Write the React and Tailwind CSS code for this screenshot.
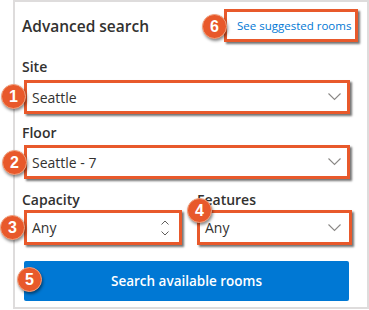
import React from 'react';

const font = { fontFamily: '"Open Sans", "Noto Sans", sans-serif' };

const Chevron = () => (
    <svg width="13" height="8" viewBox="0 0 13 8" className="shrink-0">
        <polyline points="0.5,0.5 6.5,6.5 12.5,0.5" fill="none" stroke="#8a8886" strokeWidth="1.1" />
    </svg>
);

const Spinner = () => (
    <div className="flex flex-col items-center gap-[6px]">
        <svg width="8" height="5" viewBox="0 0 8 5">
            <polyline points="0.5,4.5 4,1 7.5,4.5" fill="none" stroke="#605e5c" strokeWidth="1" />
        </svg>
        <svg width="8" height="5" viewBox="0 0 8 5">
            <polyline points="0.5,0.5 4,4 7.5,0.5" fill="none" stroke="#605e5c" strokeWidth="1" />
        </svg>
    </div>
);

const Badge = ({ n, className }) => (
    <div
        className={`absolute w-[25px] h-[25px] rounded-full bg-[#e8592b] border border-[#f2a27f] text-white font-bold text-[16px] flex items-center justify-center shadow-[1px_2px_3px_rgba(0,0,0,0.45)] ${className}`}
        style={{ fontFamily: '"Liberation Sans", Arial, sans-serif' }}
    >
        {n}
    </div>
);

const Box = ({ children, className = '' }) => (
    <div className={`border-[3px] border-[#e8592b] bg-white shadow-[2px_2px_2px_rgba(0,0,0,0.55)] flex items-center ${className}`}>
        {children}
    </div>
);

const Label = ({ children, className = '' }) => (
    <div className={`h-[20px] leading-[20px] text-[14px] font-semibold text-[#323130] ${className}`}>{children}</div>
);

export default function App() {
    return (
        <div className="relative w-[369px] h-[310px] bg-white pl-[13px] overflow-hidden" style={font}>
            <div className="h-[309px] w-[356px] border-2 border-[#dedcdc] pl-[7px] pt-[7px]">
                <div className="flex items-center justify-between h-[33px] pr-[9px]">
                    <h2 className="text-[15.5px] font-semibold text-[#323130] pt-[2px]">Advanced search</h2>
                    <Box className="h-[33px] w-[134px] pl-[10px]">
                        <a className="text-[11.5px] text-[#0078d4]">See suggested rooms</a>
                    </Box>
                </div>

                <Label className="mt-[15px]">Site</Label>
                <Box className="mt-[3px] ml-[2px] w-[326px] h-[34px] justify-between pl-[5px] pr-[6px]">
                    <span className="text-[14px] text-[#323130]">Seattle</span>
                    <Chevron />
                </Box>

                <Label className="mt-[9px]">Floor</Label>
                <Box className="mt-[2px] ml-[2px] w-[326px] h-[34px] justify-between pl-[5px] pr-[6px]">
                    <span className="text-[14px] text-[#323130]">Seattle - 7</span>
                    <Chevron />
                </Box>

                <div className="flex mt-[11px]">
                    <div className="w-[175px]">
                        <Label>Capacity</Label>
                        <Box className="ml-[2px] w-[158px] h-[35px] justify-between pl-[5px] pr-[10px]">
                            <span className="text-[14px] text-[#323130]">Any</span>
                            <Spinner />
                        </Box>
                    </div>
                    <div>
                        <Label>Features</Label>
                        <Box className="w-[155px] h-[35px] justify-between pl-[5px] pr-[8px]">
                            <span className="text-[14px] text-[#323130]">Any</span>
                            <Chevron />
                        </Box>
                    </div>
                </div>

                <button className="mt-[16px] ml-[2px] w-[325px] h-[40px] bg-[#0078d4] text-white text-[13.5px] font-semibold rounded-[2px]">
                    Search available rooms
                </button>
            </div>

            <Badge n="6" className="left-[202px] top-[14px]" />
            <Badge n="1" className="left-[1px] top-[84px]" />
            <Badge n="2" className="left-[2px] top-[150px]" />
            <Badge n="3" className="left-[0px] top-[215px]" />
            <Badge n="4" className="left-[187px] top-[198px]" />
            <Badge n="5" className="left-[17px] top-[267px]" />
        </div>
    );
}
